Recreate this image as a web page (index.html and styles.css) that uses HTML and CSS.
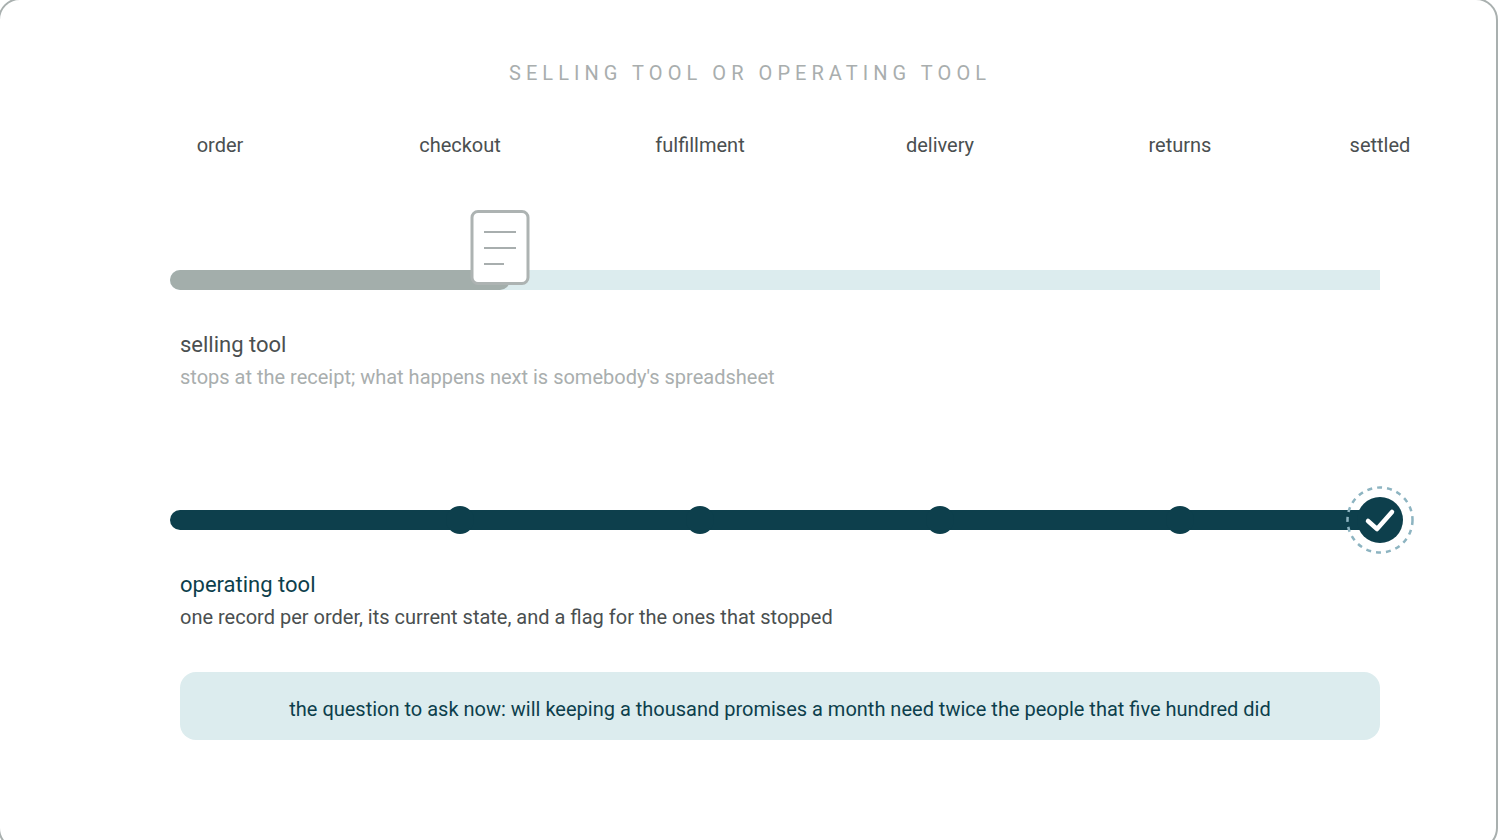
FILE: index.html
```html
<!DOCTYPE html>
<html lang="en">
<head>
<meta charset="utf-8">
<title>Selling tool or operating tool</title>
<link rel="stylesheet" href="styles.css">
</head>
<body>
<main class="frame">
  <h1 class="title">SELLING TOOL OR OPERATING TOOL</h1>
  <div class="stages">
    <span>order</span><span>checkout</span><span>fulfillment</span><span>delivery</span><span>returns</span><span>settled</span>
  </div>
  <section class="selling">
    <div class="track track-light">
      <div class="fill"></div>
      <svg class="doc" width="60" height="75" viewBox="0 0 60 75" aria-hidden="true">
        <rect x="2" y="1.5" width="56" height="72" rx="6" fill="#fff" stroke="#adb3b2" stroke-width="3"/>
        <path d="M14 22H46M14 38H46M14 54H34" stroke="#a8aeae" stroke-width="2" fill="none"/>
      </svg>
    </div>
    <h2 class="name name-muted">selling tool</h2>
    <p class="desc desc-muted">stops at the receipt; what happens next is somebody's spreadsheet</p>
  </section>
  <section class="operating">
    <div class="track track-dark">
      <i class="dot d1"></i><i class="dot d2"></i><i class="dot d3"></i><i class="dot d4"></i>
      <svg class="end" width="70" height="70" viewBox="0 0 70 70" aria-hidden="true">
        <circle cx="35" cy="35" r="32.5" fill="none" stroke="#8db4c1" stroke-width="2.5" stroke-dasharray="5 5"/>
        <circle cx="35" cy="35" r="23" fill="#0d3f4c"/>
        <path d="M23 36L32 44L47 27" fill="none" stroke="#fff" stroke-width="4.5" stroke-linecap="round" stroke-linejoin="round"/>
      </svg>
    </div>
    <h2 class="name name-dark">operating tool</h2>
    <p class="desc">one record per order, its current state, and a flag for the ones that stopped</p>
  </section>
  <div class="banner">the question to ask now: will keeping a thousand promises a month need twice the people that five hundred did</div>
</main>
</body>
</html>
```
FILE: styles.css
```css
* { box-sizing: border-box; }
html, body { margin: 0; height: 100%; overflow: hidden; background: #fff; }
body { font-family: Roboto, sans-serif; color: #4a4f50; }
.frame {
  width: 1500px;
  height: 852px;
  margin: -2px 0 0 -2px;
  border: 2px solid #a9b0af;
  border-radius: 22px;
  background: #fff;
}
.title {
  margin: 0;
  padding: 61px 0 0 4px;
  height: 133px;
  font-size: 20px;
  line-height: 24px;
  font-weight: 400;
  letter-spacing: 5.06px;
  text-align: center;
  color: #a9aeae;
}
.stages {
  display: grid;
  grid-template-columns: repeat(5, 240px) 160px;
  margin-left: 100px;
  font-size: 20px;
  line-height: 24px;
  color: #4a4f50;
  text-align: center;
}
.selling { padding-top: 113px; }
.track { position: relative; height: 20px; width: 1210px; margin-left: 170px; }
.track-light { background: #dcecee; border-radius: 10px 0 0 10px; }
.track-dark { background: #0d3f4c; border-radius: 10px 0 0 10px; }
.fill { width: 340px; height: 20px; background: #a3aeab; border-radius: 10px; }
.doc { position: absolute; left: 300px; top: -60px; }
.dot { position: absolute; top: -4px; width: 28px; height: 28px; border-radius: 50%; background: #0d3f4c; }
.d1 { left: 276px; }
.d2 { left: 516px; }
.d3 { left: 756px; }
.d4 { left: 996px; }
.end { position: absolute; left: 1175px; top: -25px; }
.name {
  margin: 0 0 0 180px;
  padding-top: 41px;
  font-size: 22px;
  line-height: 28px;
  font-weight: 400;
}
.name-muted { color: #4a4f50; }
.name-dark { color: #0d3f4c; }
.desc { margin: 4px 0 0 180px; font-size: 20px; line-height: 28px; color: #4a4f50; }
.desc-muted { color: #a9aeae; }
.operating { padding-top: 119px; }
.banner {
  width: 1200px;
  height: 68px;
  margin: 41px 0 0 180px;
  border-radius: 16px;
  background: #dcecee;
  color: #0d3f4c;
  font-size: 20px;
  line-height: 74px;
  text-align: center;
}
```
